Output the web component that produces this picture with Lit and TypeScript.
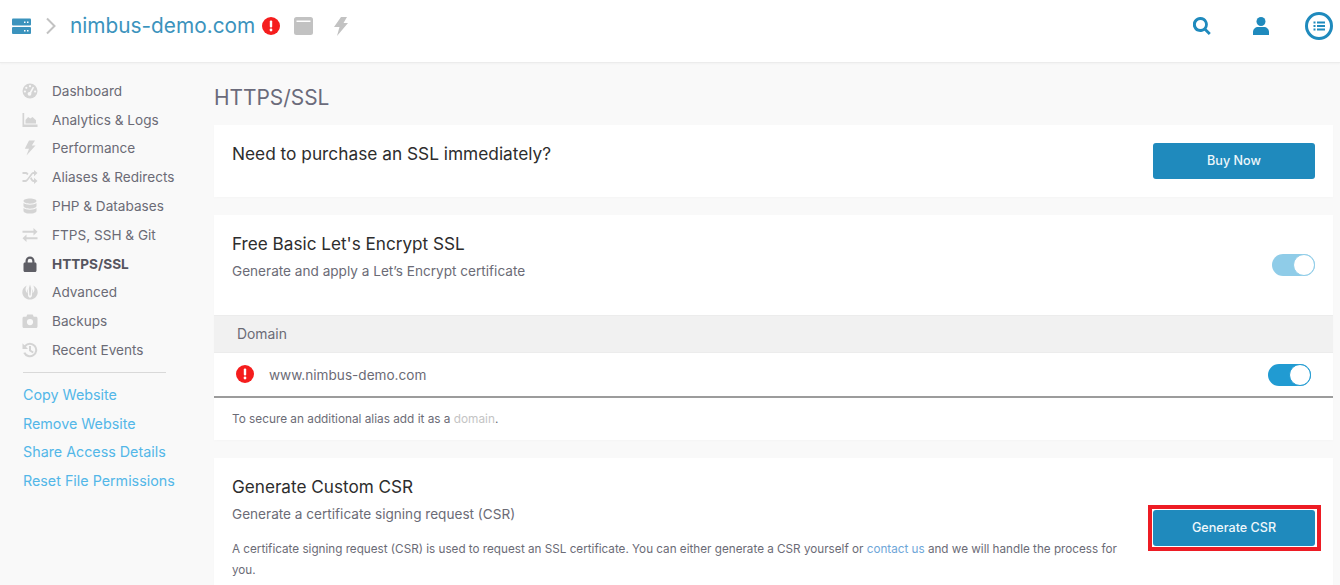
import { LitElement, html, css, svg } from 'lit';
import { customElement } from 'lit/decorators.js';

const navIcons: Record<string, unknown> = {
    gauge: svg`<circle cx="8" cy="8" r="7.500"/><g fill="#f9f9f9"><circle cx="8" cy="3.200" r="1.100"/><circle cx="4.300" cy="4.800" r="1.100"/><circle cx="2.900" cy="8.500" r="1.100"/><circle cx="13.100" cy="8.500" r="1.100"/><circle cx="7.500" cy="10.800" r="1.900"/><path d="M10.800 3.700l1.300.7-3.200 6-1.400-.8z"/></g>`,
    chart: svg`<path d="M0.500 1h1.700v11.600H15.500V15H.5z"/><path d="M3.500 11.500V8l2.600-3 2.200 1.600L10.500 5l3.500 3.200v3.300z"/>`,
    bolt: svg`<path d="M7 0.500h6L9.800 5.500h3.700L4.500 15.500 7 8.800H2.800z"/>`,
    random: svg`<path d="M.5 3h2.900c1.500 0 2.300.7 3.100 1.700L5.200 6.300C4.600 5.500 4.200 5.100 3.400 5.100H.5zM.5 10.900h2.900c.9 0 1.400-.5 2-1.300L8 6c.9-1.400 1.900-3 3.600-3h.4V.9l3.500 3.100L12 7.200V5.100h-.4c-.8 0-1.300.5-1.900 1.300L7 10C6 11.500 5 13 3.400 13H.5zM8 9.700l1.300-1.600c.6.800 1.200 2.800 2.300 2.800h.4V8.800l3.500 3.100-3.500 3.200V13h-.4c-1.500 0-2.700-1.900-3.600-3.300z"/>`,
    db: svg`<path d="M8 .5c3.600 0 6.500 1.100 6.500 2.600S11.600 5.700 8 5.700 1.500 4.600 1.500 3.100 4.400.5 8 .5zM1.500 5c1.300 1 3.800 1.700 6.500 1.700S13.200 6 14.500 5v3.100c0 1.400-2.900 2.600-6.500 2.600S1.500 9.500 1.500 8.100zM1.500 10c1.300 1 3.800 1.700 6.500 1.700s5.200-.7 6.500-1.700v2.900c0 1.500-2.900 2.600-6.500 2.600s-6.500-1.100-6.500-2.600z"/>`,
    exchange: svg`<path d="M.5 3.700h11V1l4 3.700-4 3.700V5.700H.5zM15.500 10.300h-11V7.600l-4 3.700 4 3.700v-2.700h11z"/>`,
    lock: svg`<path fill-rule="evenodd" d="M3.500 6.500V5a4.500 4.500 0 0 1 9 0v1.500h.5c.9 0 1.500.6 1.500 1.500v6.500c0 .9-.6 1.500-1.500 1.500H3c-.9 0-1.500-.6-1.500-1.500V8c0-.9.6-1.500 1.500-1.500zM5.700 6.500h4.600V5a2.300 2.300 0 0 0-4.600 0z"/>`,
    jedi: svg`<path d="M8 .5l1.200 4-.6 7h-1.200l-.6-7zM4.800 1.500C2 2.800.3 5.300.3 8.200c0 4 3.400 7.300 7.700 7.300s7.700-3.300 7.700-7.300c0-2.900-1.700-5.400-4.500-6.700 1.100 1.500 1.500 3.300 1.100 5-.2 1.100-.8 2-1.800 2.700.5-1.400.5-2.900-.2-4.200L9.900 12.300 8 14l-1.900-1.700L5.700 5c-.7 1.300-.7 2.800-.2 4.200-1-.7-1.600-1.600-1.800-2.700-.4-1.700 0-3.500 1.100-5z"/>`,
    camera: svg`<path fill-rule="evenodd" d="M5.300 1.500h5.400l1 2.200h2.300c.9 0 1.500.6 1.500 1.500v8.300c0 .9-.6 1.500-1.500 1.500H2c-.9 0-1.500-.6-1.500-1.500V5.200c0-.9.6-1.500 1.500-1.500h2.300zM8 6a3.100 3.100 0 1 0 0 6.200A3.100 3.100 0 0 0 8 6z"/>`,
    history: svg`<path d="M.5 1.300l1.900 1.900A7.300 7.300 0 1 1 1.300 11l2-.8a5.200 5.200 0 1 0 .6-5.400l2.100 2.100H.5zM7 4h2v4l2.700 1.700-1 1.600L7 9z"/>`,
};

const navItems = [
    { label: 'Dashboard', icon: 'gauge' },
    { label: 'Analytics & Logs', icon: 'chart' },
    { label: 'Performance', icon: 'bolt' },
    { label: 'Aliases & Redirects', icon: 'random' },
    { label: 'PHP & Databases', icon: 'db' },
    { label: 'FTPS, SSH & Git', icon: 'exchange' },
    { label: 'HTTPS/SSL', icon: 'lock', active: true },
    { label: 'Advanced', icon: 'jedi' },
    { label: 'Backups', icon: 'camera' },
    { label: 'Recent Events', icon: 'history' },
];

const sideLinks = ['Copy Website', 'Remove Website', 'Share Access Details', 'Reset File Permissions'];

const alertIcon = (size: number) => html`
    <svg class="alert" width=${size} height=${size} viewBox="0 0 18 18">
        <circle cx="9" cy="9" r="9" fill="#f51d1d"></circle>
        <rect x="7.800" y="3.600" width="2.400" height="7" rx="1" fill="#fff"></rect>
        <circle cx="9" cy="13" r="1.400" fill="#fff"></circle>
    </svg>
`;

@customElement('app-root')
export class AppRoot extends LitElement {
    static styles = css`
        :host {
            display: block;
            height: 585px;
            overflow: hidden;
            background: #f9f9f9;
            font-family: Inter, "Liberation Sans", sans-serif;
            font-size: 13.6px;
            color: #6b6b76;
        }
        header {
            height: 63px;
            background: white;
            border-bottom: 1px solid #ececec;
            box-shadow: 0 1px 2px rgba(0, 0, 0, 0.03);
            display: flex;
            align-items: center;
            padding: 0 7px 10px 12px;
            box-sizing: border-box;
        }
        .crumbs {
            display: flex;
            align-items: center;
        }
        .site-name {
            font-size: 20.8px;
            color: #3b93bd;
            margin: 0 7px 0 14px;
            line-height: 24px;
        }
        .grey-icon {
            fill: #c2c2c2;
        }
        .chevron {
            margin-left: 15px;
        }
        .window {
            margin-left: 14px;
        }
        .bolt {
            margin-left: 20px;
        }
        .head-actions {
            margin-left: auto;
            display: flex;
            align-items: center;
            fill: #1f8abd;
        }
        .search {
            margin-right: 42px;
        }
        .user {
            margin-right: 36px;
        }
        .layout {
            display: flex;
            align-items: flex-start;
        }
        aside {
            width: 214px;
            flex: none;
            padding-top: 13.5px;
            box-sizing: border-box;
        }
        .nav-row {
            height: 28.8px;
            display: flex;
            align-items: center;
            padding-left: 22px;
            gap: 14px;
            color: #6b6b76;
            white-space: nowrap;
        }
        .nav-row svg {
            fill: #d4d4d4;
            flex: none;
        }
        .nav-row.active {
            font-weight: 700;
            color: #55555f;
        }
        .nav-row.active svg {
            fill: #5f5f66;
        }
        .divider {
            width: 143px;
            height: 1px;
            background: #d9d9d9;
            margin: 8px 0 7.5px 23px;
        }
        .side-link {
            height: 28.7px;
            line-height: 28.7px;
            padding-left: 23px;
            font-size: 14.3px;
            color: #53b7e8;
            white-space: nowrap;
        }
        main {
            width: 1119px;
            flex: none;
        }
        h1 {
            margin: 0;
            font-size: 20.9px;
            font-weight: 400;
            line-height: 26px;
            padding-top: 22px;
            height: 62px;
            box-sizing: border-box;
            color: #6b6b7b;
        }
        .card {
            background: white;
            margin-bottom: 18px;
            box-shadow: 0 1px 3px rgba(0, 0, 0, 0.02);
        }
        .buy {
            height: 72px;
            display: flex;
            justify-content: space-between;
            padding: 18px 18px 0;
            box-sizing: border-box;
        }
        .buy-title {
            font-size: 17.3px;
            line-height: 22px;
            color: #2d2d2d;
        }
        .btn {
            width: 162px;
            height: 36px;
            padding-bottom: 2px;
            box-sizing: border-box;
            border: none;
            border-radius: 3px;
            background: #1f8abd;
            color: #eef7fb;
            font: 500 12.6px Inter, "Liberation Sans", sans-serif;
            display: flex;
            align-items: center;
            justify-content: center;
        }
        .intro {
            height: 100px;
            padding: 18px 18px 0;
            box-sizing: border-box;
            display: flex;
            justify-content: space-between;
        }
        .card-title {
            font-size: 17.15px;
            line-height: 22px;
            color: #2d2d2d;
        }
        .card-sub {
            line-height: 18px;
            margin-top: 7px;
        }
        .switch {
            width: 43px;
            height: 22px;
            border-radius: 11px;
            background: #219bd2;
            position: relative;
            flex: none;
        }
        .switch::after {
            content: "";
            position: absolute;
            right: 0;
            top: 0;
            width: 20px;
            height: 20px;
            border: 1px solid #219bd2;
            border-radius: 50%;
            background: white;
        }
        .switch.faded {
            opacity: 0.5;
            margin-top: 21px;
        }
        .table-head {
            height: 38px;
            background: #f1f1f1;
            border-top: 1px solid #ececec;
            border-bottom: 1px solid #ececec;
            box-sizing: border-box;
            display: flex;
            align-items: center;
            padding-left: 23px;
            font-size: 13.9px;
        }
        .table-row {
            height: 45px;
            border-bottom: 2px solid #9c9c9c;
            box-sizing: border-box;
            display: flex;
            align-items: center;
            padding: 1px 22px 0;
        }
        .table-row .alert {
            margin-top: -2px;
        }
        .table-row .host {
            margin-left: 15px;
        }
        .table-row .switch {
            margin-left: auto;
        }
        .note {
            height: 42px;
            padding: 12px 18px 0;
            box-sizing: border-box;
            font-size: 11.8px;
            line-height: 18px;
        }
        .muted-link {
            color: #c4c4c4;
        }
        .csr {
            padding: 18px 18px 0;
            height: 130px;
            box-sizing: border-box;
            display: flex;
            justify-content: space-between;
        }
        .csr-text {
            width: 890px;
        }
        .csr-detail {
            font-size: 11.7px;
            line-height: 21px;
            margin-top: 16px;
        }
        .csr-detail span {
            color: #6ea6d8;
        }
        .csr-action {
            border: 4px solid #ed1c24;
            padding: 1px 2px 1px 1px;
            height: 36px;
            margin: 29px -6px 0 0;
        }
    `;

    private renderNav() {
        return navItems.map(item => html`
            <div class="nav-row ${item.active ? 'active' : ''}">
                <svg width="16" height="16" viewBox="0 0 16 16">${navIcons[item.icon]}</svg>
                <span>${item.label}</span>
            </div>
        `);
    }

    private renderHeader() {
        return html`
            <header>
                <div class="crumbs">
                    <svg width="19" height="16" viewBox="0 0 19 16">
                        <rect y="0.500" width="19" height="7" rx="1" fill="#3b93bd"></rect>
                        <rect y="9" width="19" height="7" rx="1" fill="#3b93bd"></rect>
                        <rect x="12" y="3.500" width="1.500" height="1.500" fill="#fff"></rect>
                        <rect x="15" y="3.500" width="1.500" height="1.500" fill="#fff"></rect>
                        <rect x="12" y="12" width="1.500" height="1.500" fill="#fff"></rect>
                        <rect x="15" y="12" width="1.500" height="1.500" fill="#fff"></rect>
                    </svg>
                    <svg class="chevron" width="10" height="18" viewBox="0 0 10 18">
                        <path d="M1 1.500l7.500 7.500-7.500 7.500" fill="none" stroke="#c2c2c2" stroke-width="2"></path>
                    </svg>
                    <span class="site-name">nimbus-demo.com</span>
                    ${alertIcon(18)}
                    <svg class="window grey-icon" width="19" height="18" viewBox="0 0 19 18">
                        <path fill-rule="evenodd" d="M2.500 0h14A2.500 2.500 0 0 1 19 2.500v13a2.500 2.500 0 0 1-2.500 2.500h-14A2.500 2.500 0 0 1 0 15.500v-13A2.500 2.500 0 0 1 2.500 0zM2.500 3.500v1.500h14V3.500z"></path>
                    </svg>
                    <svg class="bolt grey-icon" width="15" height="19" viewBox="0 0 15 19">
                        <path d="M8 0h6L10.500 6H15L4 19l2.500-9H1z"></path>
                    </svg>
                </div>
                <div class="head-actions">
                    <svg class="search" width="18" height="18" viewBox="0 0 18 18">
                        <path fill-rule="evenodd" d="M7.500 0a7.500 7.500 0 0 1 6 11.700l4.300 4.300-2 2-4.300-4.300A7.500 7.500 0 1 1 7.500 0zm0 2.900a4.600 4.600 0 1 0 0 9.200 4.600 4.600 0 0 0 0-9.200z"></path>
                    </svg>
                    <svg class="user" width="16" height="18" viewBox="0 0 16 18">
                        <circle cx="8" cy="4.500" r="4.500"></circle>
                        <path d="M0 18v-3c0-3 2.500-5 5-5h6c2.500 0 5 2 5 5v3z"></path>
                    </svg>
                    <svg width="28" height="28" viewBox="0 0 28 28">
                        <circle cx="14" cy="14" r="12.500" fill="#fff" stroke="#1f8abd" stroke-width="3"></circle>
                        <rect x="8.500" y="9.500" width="2" height="2"></rect>
                        <rect x="12" y="9.500" width="8" height="2"></rect>
                        <rect x="8.500" y="13" width="2" height="2"></rect>
                        <rect x="12" y="13" width="8" height="2"></rect>
                        <rect x="8.500" y="16.500" width="2" height="2"></rect>
                        <rect x="12" y="16.500" width="8" height="2"></rect>
                    </svg>
                </div>
            </header>
        `;
    }

    render() {
        return html`
            ${this.renderHeader()}
            <div class="layout">
                <aside>
                    ${this.renderNav()}
                    <div class="divider"></div>
                    ${sideLinks.map(link => html`<div class="side-link">${link}</div>`)}
                </aside>
                <main>
                    <h1>HTTPS/SSL</h1>
                    <section class="card buy">
                        <div class="buy-title">Need to purchase an SSL immediately?</div>
                        <div class="btn">Buy Now</div>
                    </section>
                    <section class="card">
                        <div class="intro">
                            <div>
                                <div class="card-title">Free Basic Let's Encrypt SSL</div>
                                <div class="card-sub">Generate and apply a Let’s Encrypt certificate</div>
                            </div>
                            <div class="switch faded"></div>
                        </div>
                        <div class="table-head">Domain</div>
                        <div class="table-row">
                            ${alertIcon(18)}
                            <span class="host">www.nimbus-demo.com</span>
                            <div class="switch"></div>
                        </div>
                        <div class="note">To secure an additional alias add it as a <span class="muted-link">domain</span>.</div>
                    </section>
                    <section class="card csr">
                        <div class="csr-text">
                            <div class="card-title">Generate Custom CSR</div>
                            <div class="card-sub">Generate a certificate signing request (CSR)</div>
                            <div class="csr-detail">A certificate signing request (CSR) is used to request an SSL certificate. You can either generate a CSR yourself or <span>contact us</span> and we will handle the process for you.</div>
                        </div>
                        <div class="csr-action"><div class="btn">Generate CSR</div></div>
                    </section>
                </main>
            </div>
        `;
    }
}
